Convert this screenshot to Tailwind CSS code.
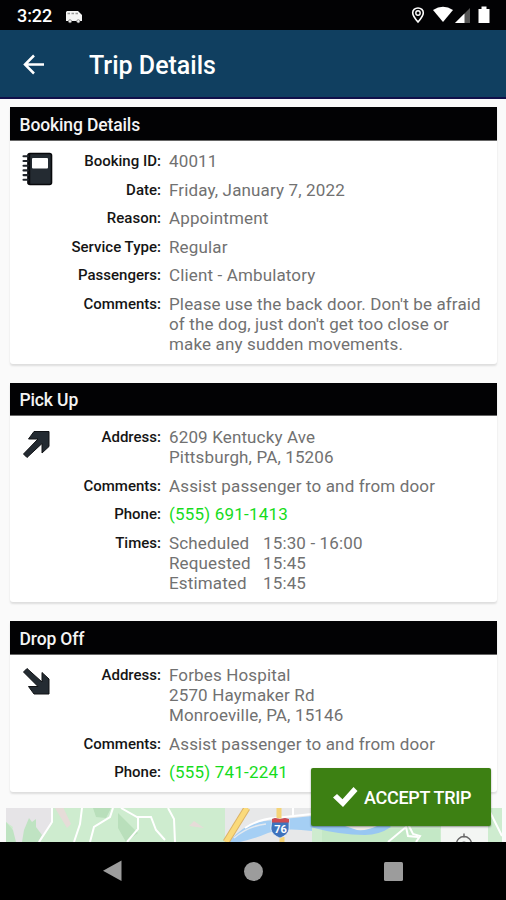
<!DOCTYPE html>
<html lang="en">
<head>
<meta charset="utf-8">
<title>Trip Details</title>
<script src="https://cdn.jsdelivr.net/npm/@tailwindcss/browser@4"></script>
</head>
<body class="w-[506px] h-[900px] overflow-hidden bg-[#fafafa] font-['Roboto',sans-serif]">
<div class="relative flex h-[900px] flex-col overflow-hidden">
  <div class="flex h-[30px] shrink-0 items-center bg-[#020204] pl-[17px] pt-[2px] text-white">
    <span class="w-[48px] text-[18px] font-medium leading-none tracking-[-0.1px]">3:22</span>
    <svg class="mt-[2px] h-[14px] w-[18px]" viewBox="0 0 18 14"><path d="M2 1h11l4 4v6H1V2z" fill="#f4f4f4"/><path d="M2.500 3.500h2.500M6.500 3.500h2.500M10.500 3.500h2.500" stroke="#999" stroke-width="1.500"/><circle cx="5" cy="11.300" r="1.600" fill="#eee" stroke="#555" stroke-width=".6"/><circle cx="13.300" cy="11.300" r="1.600" fill="#eee" stroke="#555" stroke-width=".6"/></svg>
    <svg class="ml-auto mr-[13px] h-[20px] w-[84px]" viewBox="0 0 84 20" fill="#fff"><path d="M9 2C5.800 2 3.700 4.300 3.700 6.700c0 3.200 5.300 9.300 5.300 9.300s5.300-6.100 5.300-9.300C14.300 4.300 12.200 2 9 2z" fill="none" stroke="#fff" stroke-width="1.600"/><circle cx="9" cy="7" r="2.200" fill="none" stroke="#fff" stroke-width="1.400"/><path d="M24 4q10-6.500 20 0L34 16z"/><path d="M46 17 61 2v15z" fill="#555"/><path d="M46 17 55.500 7.500V17z"/><path d="M69.500 3h3V.500h5V3h3v14h-11z"/></svg>
  </div>
  <div class="flex h-[69px] shrink-0 items-center border-b-2 border-[#11104a] bg-[#103f60] pl-[22px] pt-[3px] text-white">
    <svg class="mr-[43px] h-[24px] w-[24px]" viewBox="0 0 24 24" fill="none" stroke="#fff" stroke-width="2.500"><path d="M22 11.500H3M12 2.500 3 11.500l9 9"/></svg>
    <h1 class="pt-px text-[25px] font-medium leading-none">Trip Details</h1>
  </div>

  <main class="flex shrink-0 flex-col gap-[19px] pl-[10px] pr-[9px] pt-[8px] text-[17px] leading-[20.100px] tracking-[0.14px] text-[#717171]">
    <section class="h-[257px] rounded-b-[3px] bg-white shadow-[0_2px_2px_#dedede]">
      <h2 class="flex h-[33.500px] items-center border-b border-[#666] bg-[#020204] pl-[9.500px] pt-[3px] text-[17.500px] font-medium tracking-[-0.130px] text-[#f4f4f4]">Booking Details</h2>
      <div class="flex pt-[10.500px]">
        <svg class="ml-[12px] mt-px h-[34px] w-[31px]" viewBox="0 0 31 34"><rect x="6" y="1.500" width="23.500" height="31" rx="2" fill="#242b32" stroke="#08090c" stroke-width="1.600"/><path d="M7 2v30" stroke="#08090c" stroke-width="2.500"/><rect x="10" y="6" width="16" height="10.500" rx="1" fill="#fff"/><path d="M1.500 4.300h4.500M1.500 9h4.500M1.500 13.700h4.500M1.500 18.400h4.500M1.500 23.100h4.500M1.500 27.800h4.500" stroke="#20252b" stroke-width="2.100" stroke-linecap="round"/></svg>
        <dl class="ml-[8px] grid grid-cols-[100px_320px] gap-x-[8px] gap-y-[8.500px] [&_dt]:text-right [&_dt]:text-[15px] [&_dt]:font-medium [&_dt]:tracking-[0.010px] [&_dt]:text-[#151515]">
          <dt>Booking ID:</dt><dd>40011</dd>
          <dt>Date:</dt><dd>Friday, January 7, 2022</dd>
          <dt>Reason:</dt><dd>Appointment</dd>
          <dt>Service Type:</dt><dd>Regular</dd>
          <dt>Passengers:</dt><dd>Client - Ambulatory</dd>
          <dt>Comments:</dt><dd>Please use the back door. Don't be afraid<br>of the dog, just don't get too close or<br>make any sudden movements.</dd>
        </dl>
      </div>
    </section>

    <section class="h-[219px] rounded-b-[3px] bg-white shadow-[0_2px_2px_#dedede]">
      <h2 class="flex h-[33px] items-center border-b border-[#666] bg-[#020204] pl-[9.500px] pt-[2px] text-[17.500px] font-medium tracking-[-0.130px] text-[#f4f4f4]">Pick Up</h2>
      <div class="flex pt-[11px]">
        <svg class="ml-[12px] mt-[3px] h-[30px] w-[31px]" viewBox="0 0 31 30"><path d="M1.500 24 16 9H6.500l5.500-7.500h15V16.500l-7 6.500v-9.500L5 27.500z" fill="#242b32" stroke="#101215" stroke-linejoin="round"/></svg>
        <dl class="ml-[8px] grid grid-cols-[100px_320px] gap-x-[8px] gap-y-[8.500px] [&_dt]:text-right [&_dt]:text-[15px] [&_dt]:font-medium [&_dt]:tracking-[0.010px] [&_dt]:text-[#151515]">
          <dt>Address:</dt><dd>6209 Kentucky Ave<br>Pittsburgh, PA, 15206</dd>
          <dt>Comments:</dt><dd>Assist passenger to and from door</dd>
          <dt>Phone:</dt><dd class="tracking-[0.200px] text-[#16dc1c]">(555) 691-1413</dd>
          <dt>Times:</dt>
          <dd class="grid grid-cols-[94px_1fr]"><span>Scheduled</span><span>15:30 - 16:00</span><span>Requested</span><span>15:45</span><span>Estimated</span><span>15:45</span></dd>
        </dl>
      </div>
    </section>

    <section class="h-[171px] rounded-b-[3px] bg-white shadow-[0_2px_2px_#dedede]">
      <h2 class="flex h-[33.500px] items-center border-b border-[#666] bg-[#020204] pl-[9.500px] pt-[3px] text-[17.500px] font-medium tracking-[-0.130px] text-[#f4f4f4]">Drop Off</h2>
      <div class="flex pt-[10.500px]">
        <svg class="ml-[12px] mt-[2px] h-[30px] w-[31px]" viewBox="0 0 31 30"><path d="M1.500 5 16 19.500H6.500l5.500 7.500h15V12l-7-6.500V15L5 1.500z" fill="#242b32" stroke="#101215" stroke-linejoin="round"/></svg>
        <dl class="ml-[8px] grid grid-cols-[100px_320px] gap-x-[8px] gap-y-[8.500px] [&_dt]:text-right [&_dt]:text-[15px] [&_dt]:font-medium [&_dt]:tracking-[0.010px] [&_dt]:text-[#151515]">
          <dt>Address:</dt><dd>Forbes Hospital<br>2570 Haymaker Rd<br>Monroeville, PA, 15146</dd>
          <dt>Comments:</dt><dd>Assist passenger to and from door</dd>
          <dt>Phone:</dt><dd class="tracking-[0.200px] text-[#16dc1c]">(555) 741-2241</dd>
        </dl>
      </div>
    </section>
  </main>

  <svg class="ml-[6px] mt-[16px] h-[34px] w-[496px] shrink-0" viewBox="6 808 496 34" fill="none">
    <path d="M6 808h496v34H6z" fill="#ceeccf"/>
    <path d="M6 808h46v16l-12 18H8l5-15-7-5z" fill="#e6e4e7"/>
    <path d="m24 830 5-12 3 4 4-3v8l6 8-4 7H22zM6 822l7 8 3 12H6z" fill="#bfe3c2"/>
    <path d="m55 808 8-1 8 17-4 4zM189 826l5-5 10 7z" fill="#e6dcd8"/>
    <path d="m93 808 18 0-5 10-10-1zM118 813l20 20-12 9-8-14z" fill="#b9dfbb"/>
    <path d="M225 808h87v34h-87z" fill="#e7e8e9"/>
    <path d="M322 829h118v13H322z" fill="#c4e8c6"/>
    <path d="M229 842q16-20 36-21l47-5v15q-28-4-44 2-14 6-28 9z" fill="#a5cff4"/>
    <path d="M234 838q14-12 32-14" stroke="#e4eaf0" stroke-width="1.500"/>
    <path d="M245 828q14-9 30-10l37-4M293 816v-8" stroke="#fff" stroke-width="2"/>
    <path d="M310 817h75q-1 4 6 10-12 8-26 8-25 0-55-8z" fill="#98c7f2"/>
    <path d="M345 826h32q-10 5-20 4z" fill="#efece6"/>
    <path d="M247 808 226 842" stroke="#dcb366" stroke-width="7"/><path d="M247 808 226 842" stroke="#fada7b" stroke-width="5"/>
    <path d="M279 808v12M282 837v5" stroke="#f5d477" stroke-width="5"/>
    <path d="M52 808v14l-13 20M82 808l-2 16-6 18M113 808l-3 9-16 10-4 15M121 808l16 9h14l5 13 9 10M138 817v12l-11 13M168 808l6 11 1 23M388 842l18-15 2 9 10 1M490 812l12 24" stroke="#fff" stroke-width="2"/>
    <path d="M408 824l5 10 7 2-4 6" stroke="#fff" stroke-width="2"/>
    <path d="m272 819 3-1 5 1 5-1 4 1v9c0 5-4 8-9 10-5-2-9-5-9-10z" fill="#3e73bd" stroke="#fff" stroke-width=".6"/>
    <path d="m272 819 3-1 5 1 5-1 4 1v3.500h-17z" fill="#cf4b50"/>
    <text x="280.500" y="833" text-anchor="middle" fill="#fff" font-family="Roboto" font-size="11" font-weight="700">76</text>
    <path d="M441 826h47v16h-47z" fill="#f3f6f3"/>
    <circle cx="464" cy="844" r="7.500" stroke="#666" stroke-width="1.400"/><circle cx="464" cy="844.500" r="3" fill="#666"/><path d="M464 833.500v4" stroke="#666" stroke-width="1.400"/>
  </svg>

  <nav class="flex h-[58px] shrink-0 items-center bg-black pl-[102px]">
    <svg class="h-[22px] w-[20px]" viewBox="0 0 20 22"><path d="M19.500.5v20.500L1 10.800z" fill="#9c9c9c"/></svg>
    <span class="ml-[122px] size-[19px] rounded-full bg-[#9c9c9c]"></span>
    <span class="ml-[121px] size-[19px] rounded-[1.500px] bg-[#9c9c9c]"></span>
  </nav>

  <button class="absolute left-[311px] top-[768px] flex h-[58px] w-[180px] items-center rounded-[2px] bg-[#3d8013] pl-[21px] text-[18px] font-medium text-white shadow-[0_1px_2px_#0006]">
    <svg class="mr-[6px] h-[22px] w-[26px]" viewBox="0 0 26 22"><path d="m1 11.500 4-3.500 5.500 5.200L21.500 1l4 4L11 21z" fill="#fff"/></svg>
    <span class="whitespace-nowrap pt-[2px] leading-none tracking-[-0.300px]">ACCEPT TRIP</span>
  </button>
</div>
</body>
</html>
